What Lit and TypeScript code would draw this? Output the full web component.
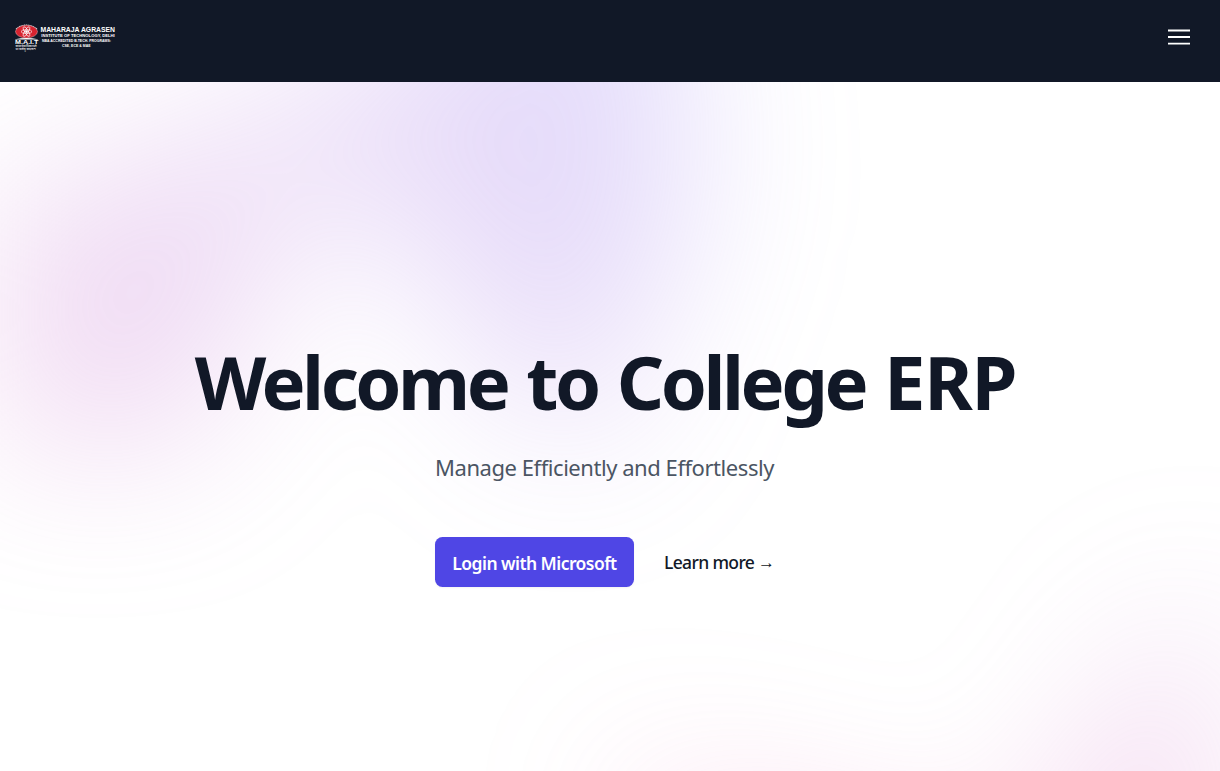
import { LitElement, html, css } from "lit";
import { customElement } from "lit/decorators.js";

@customElement("app-root")
export class AppRoot extends LitElement {
  static styles = css`
    :host {
      display: flex;
      flex-direction: column;
      height: 771px;
      background: #fff;
      overflow: hidden;
      font-family: "Noto Sans", "Open Sans", sans-serif;
      color: #111827;
    }
    * { box-sizing: border-box; }
    header {
      flex: none;
      height: 82px;
      background: #111827;
      display: flex;
      justify-content: space-between;
      align-items: flex-start;
      padding: 22px 30px 0 14px;
      position: relative;
      z-index: 2;
    }
    .logo { display: block; width: 104px; height: 30px; }
    .menu { display: block; width: 22px; height: 17px; margin-top: 7px; }
    main {
      flex: 1;
      position: relative;
      isolation: isolate;
      padding: 262px 11px 0 0;
      display: flex;
      flex-direction: column;
      align-items: center;
    }
    .glow {
      position: absolute;
      left: 0;
      width: 1210px;
      height: 848px;
      overflow: hidden;
      filter: blur(80px);
      z-index: -1;
    }
    .top { top: -482px; }
    .bottom { top: 142px; }
    .shape {
      width: 1443.75px;
      height: 847.5px;
      opacity: 0.3;
      background: linear-gradient(to top right, #ff80b5, #9089fc);
      clip-path: polygon(74.1% 44.1%, 100% 61.6%, 97.5% 26.9%, 85.5% 0.1%, 80.7% 2%, 72.5% 32.5%, 60.2% 62.4%, 52.4% 68.1%, 47.5% 58.3%, 45.2% 34.5%, 27.5% 76.7%, 0.1% 64.9%, 17.9% 100%, 27.6% 76.8%, 76.1% 97.7%, 74.1% 44.1%);
    }
    .top .shape { transform: translateX(-716.9px) rotate(30deg); }
    .bottom .shape { transform: translateX(603.1px); }
    h1 {
      margin: 0;
      padding-left: 2px;
      font-size: 74px;
      line-height: 75px;
      font-weight: 700;
      letter-spacing: -3.5px;
      word-spacing: 3.2px;
      white-space: nowrap;
    }
    .caps { letter-spacing: -1.3px; }
    p {
      margin: 28px 0 0;
      font-size: 22px;
      line-height: 40px;
      color: #4b5563;
      letter-spacing: -0.45px;
      white-space: nowrap;
    }
    .actions {
      margin-top: 50px;
      display: flex;
      align-items: center;
      gap: 30px;
      white-space: nowrap;
    }
    .login {
      display: block;
      width: 199px;
      height: 50px;
      border-radius: 7.5px;
      border: 0;
      background: #4f46e5;
      color: #fff;
      font: 600 17.5px/53px "Noto Sans", sans-serif;
      letter-spacing: -0.55px;
      text-align: center;
      padding: 0;
      box-shadow: 0 1px 2px rgb(0 0 0 / 0.05);
    }
    .learn {
      width: 110px;
      font-size: 17.5px;
      line-height: 30px;
      font-weight: 500;
      letter-spacing: -0.65px;
    }
    .arrow {
      font-family: "Liberation Serif", serif;
      font-size: 17px;
      line-height: 1;
      font-weight: 400;
      letter-spacing: 0;
      vertical-align: 1px;
    }
  `;

  render() {
    return html`
      <header>
        <svg class="logo" viewBox="0 0 104 30" font-family="Liberation Sans" font-weight="700" fill="#fff">
          <path d="M2 7Q12-1 23 7" fill="none" stroke="#c9cbd0" stroke-width="1.2" stroke-dasharray="1.2 .6" />
          <ellipse cx="12.5" cy="9.6" rx="11" ry="6.3" fill="#d8232f" stroke="#e8b0b4" stroke-width=".5" />
          <g fill="none" stroke="#fff" stroke-width=".7">
            <ellipse cx="12.5" cy="9.6" rx="5.5" ry="1.8" />
            <ellipse cx="12.5" cy="9.6" rx="5.5" ry="1.8" transform="rotate(60 12.5 9.6)" />
            <ellipse cx="12.5" cy="9.6" rx="5.5" ry="1.8" transform="rotate(120 12.5 9.6)" />
          </g>
          <circle cx="12.5" cy="9.6" r="1.3" />
          <path d="M1 17.2Q12.5 15 24 17.2V17.6H1Z" />
          <text x="1" y="21.8" font-size="4.8" textLength="23.5" lengthAdjust="spacingAndGlyphs">M.A.I.T</text>
          <text x="1.5" y="24.8" font-size="2.5" textLength="21" lengthAdjust="spacingAndGlyphs" font-family="Noto Sans" fill="#d5d7db">कर्मण्येवाधिकारस्ते</text>
          <text x="1.5" y="28" font-size="2.5" textLength="20" lengthAdjust="spacingAndGlyphs" font-family="Noto Sans" fill="#d5d7db">मा फलेषु कदाचन</text>
          <text x="26.5" y="10" font-size="6.7" textLength="74.5" lengthAdjust="spacingAndGlyphs">MAHARAJA AGRASEN</text>
          <text x="27.3" y="15.2" font-size="4.3" textLength="73.5" lengthAdjust="spacingAndGlyphs">INSTITUTE OF TECHNOLOGY, DELHI</text>
          <text x="28" y="20" font-size="3.6" textLength="69" lengthAdjust="spacingAndGlyphs">NBA ACCREDITED B.TECH. PROGRAMS:</text>
          <text x="48" y="24.8" font-size="3.4" textLength="28.5" lengthAdjust="spacingAndGlyphs">CSE, ECE &amp; MAE</text>
        </svg>
        <svg class="menu" viewBox="0 0 22 17" stroke="#fff" stroke-width="1.9">
          <path d="M0 1.5H22M0 8H22M0 14.6H22" />
        </svg>
      </header>
      <main>
        <div class="glow top"><div class="shape"></div></div>
        <div class="glow bottom"><div class="shape"></div></div>
        <h1>Welcome to College <span class="caps">ERP</span></h1>
        <p>Manage Efficiently and Effortlessly</p>
        <div class="actions">
          <button class="login">Login with Microsoft</button>
          <span class="learn">Learn more <span class="arrow">→</span></span>
        </div>
      </main>
    `;
  }
}
